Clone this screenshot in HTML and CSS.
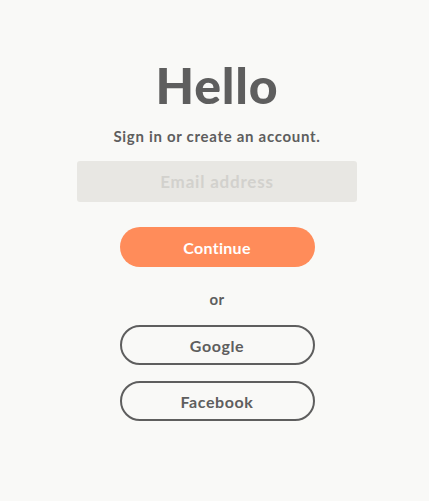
FILE: index.html
```html
<!DOCTYPE html>
<html lang="en">
<head>
<meta charset="utf-8">
<title>Hello</title>
<link rel="stylesheet" href="styles.css">
</head>
<body>
<main class="auth">
  <h1 class="title">Hello</h1>
  <p class="subtitle">Sign in or create an account.</p>
  <form class="form">
    <input class="email" type="email" placeholder="Email address">
    <button type="button" class="btn btn-primary">Continue</button>
  </form>
  <p class="or">or</p>
  <div class="socials">
    <button type="button" class="btn btn-outline">Google</button>
    <button type="button" class="btn btn-outline">Facebook</button>
  </div>
</main>
</body>
</html>
```
FILE: styles.css
```css
html, body {
  margin: 0;
  padding: 0;
  background: #f9f9f7;
}
body {
  font-family: Lato, "Open Sans", "Liberation Sans", sans-serif;
  color: #5e5e5e;
  height: 501px;
}
.auth {
  display: flex;
  flex-direction: column;
  align-items: center;
  padding: 55px 0 0 5px;
}
.title {
  margin: 0;
  font-size: 50px;
  font-weight: 900;
  line-height: 60px;
  letter-spacing: 0.8px;
}
.subtitle {
  margin: 11px 0 0;
  font-size: 15px;
  font-weight: 700;
  line-height: 20px;
  letter-spacing: 0.7px;
}
.form {
  display: flex;
  flex-direction: column;
  align-items: center;
  margin-top: 15px;
}
.email {
  box-sizing: border-box;
  width: 280px;
  height: 41px;
  border: none;
  border-radius: 3px;
  background: #e8e7e3;
  font-family: inherit;
  font-size: 17px;
  font-weight: 700;
  letter-spacing: 0.8px;
  text-align: center;
  color: #5e5e5e;
  outline: none;
}
.email::placeholder {
  color: #d2d1cd;
}
.btn {
  box-sizing: border-box;
  width: 195px;
  height: 40px;
  border-radius: 20px;
  font-family: inherit;
  font-size: 16px;
  font-weight: 700;
  letter-spacing: 0.6px;
  cursor: pointer;
}
.btn-primary {
  margin-top: 25px;
  border: none;
  background: #ff8c5a;
  color: #ffffff;
  letter-spacing: 0.3px;
}
.or {
  margin: 22px 0 0;
  font-size: 15px;
  font-weight: 700;
  line-height: 20px;
  letter-spacing: 0.5px;
}
.socials {
  display: flex;
  flex-direction: column;
  gap: 16px;
  margin-top: 16px;
}
.btn-outline {
  border: 2px solid #5e5e5e;
  background: transparent;
  color: #5e5e5e;
}
```
